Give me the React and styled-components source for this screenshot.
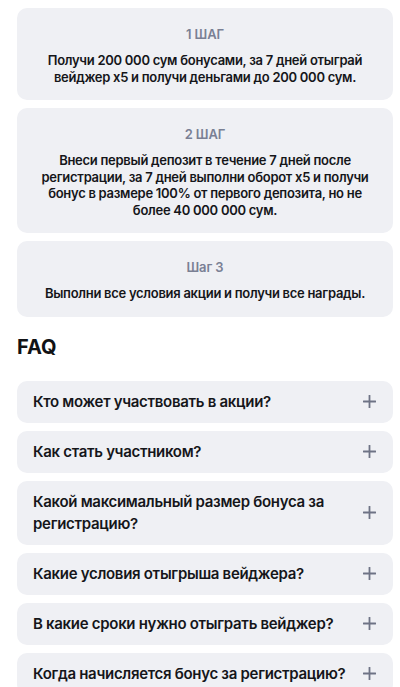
import React from 'react';
import styled, { createGlobalStyle } from 'styled-components';

const GlobalStyle = createGlobalStyle`
  * { box-sizing: border-box; }
  body {
    margin: 0;
    background: #ffffff;
    font-family: Inter, "Noto Sans", sans-serif;
    color: #15161a;
  }
`;

const Page = styled.div`
  padding: 8px 7px 0 17px;
  display: flex;
  flex-direction: column;
`;

const Steps = styled.div`
  display: flex;
  flex-direction: column;
  gap: 8px;
`;

const StepCard = styled.div`
  background: #eff0f4;
  border-radius: 10px;
  padding: 18px 18px 15px;
  text-align: center;
  display: flex;
  flex-direction: column;
  gap: 10px;
`;

const StepTitle = styled.div`
  font-size: 13px;
  line-height: 16px;
  font-weight: 600;
  letter-spacing: -0.1px;
  color: #7a8094;
`;

const StepText = styled.div`
  font-size: 13px;
  line-height: 16.5px;
  font-weight: 600;
  letter-spacing: -0.28px;
  color: #15161a;
`;

const Heading = styled.h2`
  margin: 17px 0 0;
  font-size: 20px;
  line-height: 26px;
  font-weight: 700;
  color: #111215;
`;

const FaqList = styled.div`
  margin-top: 21px;
  display: flex;
  flex-direction: column;
  gap: 8px;
`;

const FaqItem = styled.div`
  background: #eff0f4;
  border-radius: 10px;
  padding: 10px 16px 10px 16px;
  display: flex;
  align-items: center;
  justify-content: space-between;
  gap: 8px;
`;

const Question = styled.div`
  font-size: 15px;
  line-height: 22px;
  font-weight: 600;
  letter-spacing: -0.3px;
  color: #15161a;
  max-width: ${(p) => p.$narrow ? '300px' : 'none'};
`;

const PlusIcon = () => (
  <svg width="13" height="13" viewBox="0 0 13 13" fill="none" style={{ flexShrink: 0, marginRight: 1 }}>
    <path d="M6.5 0.5v12M0.5 6.5h12" stroke="#6e7385" strokeWidth="1.8" strokeLinecap="round" />
  </svg>
);

const steps = [
  { title: '1 ШАГ', text: 'Получи 200 000 сум бонусами, за 7 дней отыграй вейджер х5 и получи деньгами до 200 000 сум.' },
  { title: '2 ШАГ', text: 'Внеси первый депозит в течение 7 дней после регистрации, за 7 дней выполни оборот х5 и получи бонус в размере 100% от первого депозита, но не более 40 000 000 сум.' },
  { title: 'Шаг 3', text: 'Выполни все условия акции и получи все награды.' },
];

const questions = [
  'Кто может участвовать в акции?',
  'Как стать участником?',
  'Какой максимальный размер бонуса за регистрацию?',
  'Какие условия отыгрыша вейджера?',
  'В какие сроки нужно отыграть вейджер?',
  'Когда начисляется бонус за регистрацию?',
];

export default function App() {
  return (
    <>
      <GlobalStyle />
      <Page>
        <Steps>
          {steps.map((s) => (
            <StepCard key={s.title}>
              <StepTitle>{s.title}</StepTitle>
              <StepText>{s.text}</StepText>
            </StepCard>
          ))}
        </Steps>
        <Heading>FAQ</Heading>
        <FaqList>
          {questions.map((q, i) => (
            <FaqItem key={q}>
              <Question $narrow={i === 2}>{q}</Question>
              <PlusIcon />
            </FaqItem>
          ))}
        </FaqList>
      </Page>
    </>
  );
}
